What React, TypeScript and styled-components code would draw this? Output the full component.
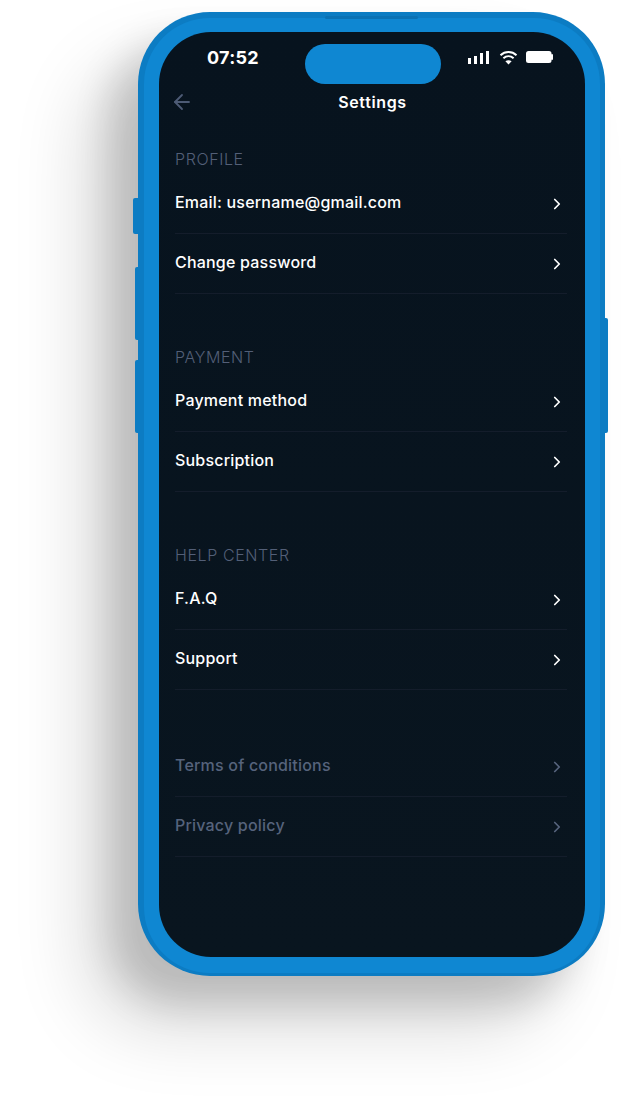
import styled, { createGlobalStyle } from 'styled-components';
import { ArrowLeft, ChevronRight } from 'lucide-react';

const GlobalStyle = createGlobalStyle`
  html, body {
    margin: 0;
    padding: 0;
    background: #fff;
  }
  * { box-sizing: border-box; }
`;

const Page = styled.div`
  width: 631px;
  height: 1110px;
  padding: 12px 0 0 138px;
  overflow: hidden;
  font-family: Inter, "Liberation Sans", sans-serif;
`;

const Phone = styled.div`
  position: relative;
  width: 467px;
  height: 964px;
  padding: 6px 5px 3px 6px;
  border-radius: 72px;
  background: #0c7cc3;
  box-shadow: -28px 28px 36px rgba(0, 0, 0, 0.15), -52px 52px 72px rgba(0, 0, 0, 0.15);
`;

const Bezel = styled.div`
  height: 100%;
  padding: 14px 15px 16px 15px;
  border-radius: 66px;
  background: #0f87d2;
`;

const Screen = styled.div`
  position: relative;
  height: 100%;
  padding: 0 18px 0 16px;
  border-radius: 52px;
  background: linear-gradient(#07131e, #09151f);
  color: #fff;
`;

const SideButton = styled.div<{ $side: 'left' | 'right'; $top: number; $h: number; $w: number }>`
  position: absolute;
  top: ${p => p.$top}px;
  ${p => p.$side}: ${p => -p.$w}px;
  width: ${p => p.$w}px;
  height: ${p => p.$h}px;
  background: #0c7cc3;
  border-radius: ${p => (p.$side === 'left' ? '2px 0 0 2px' : '0 2px 2px 0')};
`;

const Speaker = styled.div`
  position: absolute;
  top: 4px;
  left: 187px;
  width: 93px;
  height: 3px;
  border-radius: 2px;
  background: #0b72b4;
`;

const Island = styled.div`
  position: absolute;
  top: 12px;
  left: 146px;
  width: 136px;
  height: 40px;
  border-radius: 20px;
  background: #0f87d2;
`;

const StatusBar = styled.div`
  height: 50px;
  padding: 0 14px 0 32px;
  display: flex;
  align-items: center;
  justify-content: space-between;
`;

const Time = styled.span`
  font-size: 18px;
  font-weight: 700;
  letter-spacing: 0.3px;
`;

const StatusIcons = styled.div`
  display: flex;
  align-items: center;
  gap: 8px;
`;

const Signal = styled.svg`
  margin-right: 2px;
`;

const Header = styled.div`
  position: relative;
  height: 40px;
  display: flex;
  align-items: center;
  justify-content: center;
`;

const BackButton = styled.div`
  position: absolute;
  left: -5px;
  top: 8px;
  display: flex;
  color: #4d5b75;
`;

const Title = styled.h1`
  margin: 0 0 0 3px;
  font-size: 16px;
  font-weight: 600;
  letter-spacing: 0.65px;
`;

const Content = styled.div`
  padding-top: 24px;
  display: flex;
  flex-direction: column;
`;

const Section = styled.section<{ $gap?: number }>`
  margin-top: ${p => p.$gap ?? 0}px;
`;

const Label = styled.div`
  height: 28px;
  line-height: 26px;
  font-size: 16px;
  font-weight: 300;
  letter-spacing: 0.6px;
  color: #535f77;
`;

const Row = styled.div<{ $muted?: boolean }>`
  height: 60px;
  padding-bottom: 3px;
  display: flex;
  align-items: center;
  justify-content: space-between;
  border-bottom: 1px solid #141d2b;
  color: ${p => (p.$muted ? '#56637c' : '#fff')};
`;

const RowText = styled.span`
  font-size: 16px;
  font-weight: 500;
  letter-spacing: 0.2px;
`;

const Chevron = styled(ChevronRight)`
  margin: 4px 1px 0 0;
`;

const rows = (items: string[], muted = false) =>
  items.map(text => (
    <Row key={text} $muted={muted}>
      <RowText>{text}</RowText>
      <Chevron size={18} strokeWidth={2.3} />
    </Row>
  ));

export default function App() {
  return (
    <Page>
      <GlobalStyle />
      <Phone>
        <SideButton $side="left" $top={186} $h={36} $w={5} />
        <SideButton $side="left" $top={255} $h={73} $w={3} />
        <SideButton $side="left" $top={348} $h={73} $w={3} />
        <SideButton $side="right" $top={306} $h={115} $w={3} />
        <Speaker />
        <Bezel>
          <Screen>
            <Island />
            <StatusBar>
              <Time>07:52</Time>
              <StatusIcons>
                <Signal width="21" height="13" viewBox="0 0 21 13" fill="#fff">
                  <rect x="0" y="7" width="3" height="6" />
                  <rect x="6" y="5" width="3" height="8" />
                  <rect x="12" y="2" width="3" height="11" />
                  <rect x="18" y="0" width="3" height="13" />
                </Signal>
                <svg width="19" height="15" viewBox="0 0 18 15" fill="none" stroke="#fff" strokeWidth="2">
                  <path d="M1 5.2C5.6 0.9 12.4 0.9 17 5.2" />
                  <path d="M3.9 8.2C6.9 5.6 11.1 5.6 14.1 8.2" />
                  <path d="M9 14.6L5.9 11.2C7.8 9.8 10.2 9.8 12.1 11.2Z" fill="#fff" stroke="none" />
                </svg>
                <svg width="27" height="12" viewBox="0 0 27 12" fill="#fff">
                  <rect x="0" y="0" width="25.5" height="12" rx="2.5" />
                  <rect x="25" y="3" width="2" height="6" rx="1" />
                </svg>
              </StatusIcons>
            </StatusBar>
            <Header>
              <BackButton>
                <ArrowLeft size={24} strokeWidth={1.8} />
              </BackButton>
              <Title>Settings</Title>
            </Header>
            <Content>
              <Section>
                <Label>PROFILE</Label>
                {rows(['Email: username@gmail.com', 'Change password'])}
              </Section>
              <Section $gap={50}>
                <Label>PAYMENT</Label>
                {rows(['Payment method', 'Subscription'])}
              </Section>
              <Section $gap={50}>
                <Label>HELP CENTER</Label>
                {rows(['F.A.Q', 'Support'])}
              </Section>
              <Section $gap={47}>{rows(['Terms of conditions', 'Privacy policy'], true)}</Section>
            </Content>
          </Screen>
        </Bezel>
      </Phone>
    </Page>
  );
}
